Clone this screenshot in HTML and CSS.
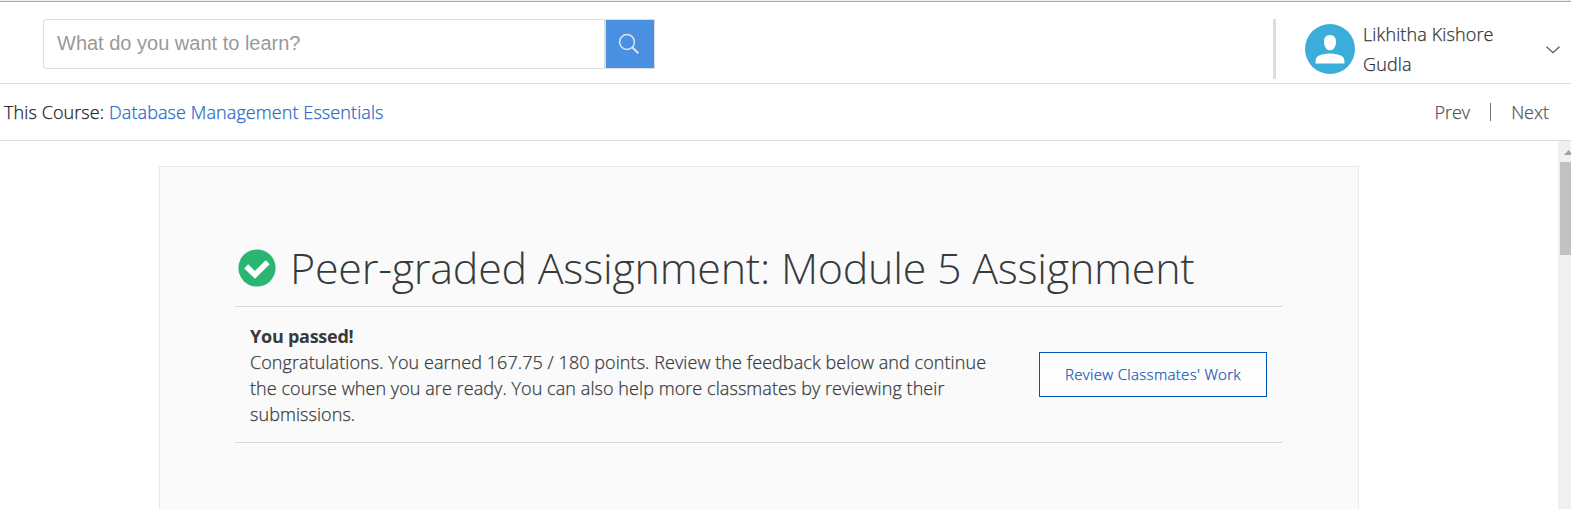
FILE: index.html
```html
<!DOCTYPE html>
<html lang="en">
<head>
<meta charset="utf-8">
<title>Peer-graded Assignment: Module 5 Assignment</title>
<link rel="stylesheet" href="styles.css">
</head>
<body>
<div class="top-rule"></div>
<header class="header">
  <form class="search">
    <input class="search-input" type="text" placeholder="What do you want to learn?">
    <button class="search-button" type="button" aria-label="Search">
      <svg width="22" height="22" viewBox="0 0 22 22" fill="none" stroke="#dde5ee" stroke-width="1.5"><circle cx="9" cy="9" r="7.4"/><path d="M14.3 14.3L20.3 20.3" stroke-width="2"/></svg>
    </button>
  </form>
  <div class="account">
    <svg class="avatar" width="50" height="50" viewBox="0 0 50 50"><circle cx="25" cy="25" r="25" fill="#3badda"/><path d="M25 11c4.200 0 6.200 3 6 7.200-.2 4.600-2.600 8.100-6 8.100s-5.800-3.500-6-8.100C18.800 14 20.800 11 25 11zM10.500 39.500c0-3.500.3-6.300 2.600-7.400C16 30.600 20.500 29.600 25 29.600s9 1 11.900 2.500c2.300 1.100 2.600 3.900 2.600 7.400z" fill="#fff"/></svg>
    <div class="name">Likhitha Kishore<br>Gudla</div>
    <svg class="chevron" width="14" height="8" viewBox="0 0 14 8" fill="none" stroke="#555" stroke-width="1.2"><path d="M.5.700L7 6.800L13.500.700"/></svg>
  </div>
</header>
<nav class="course-bar">
  <div class="course">This Course: <a class="course-link">Database Management Essentials</a></div>
  <div class="pager"><a class="prev">Prev</a><span class="separator"></span><a class="next">Next</a></div>
</nav>
<div class="content">
  <main class="card">
    <div class="title-row">
      <svg class="check" width="38" height="38" viewBox="0 0 38 38"><circle cx="19" cy="19" r="18.600" fill="#2ab573"/><path d="M8.200 17.400L17 25.800L29.700 13.300" fill="none" stroke="#fff" stroke-width="5.600"/></svg>
      <h1 class="title">Peer-graded Assignment: Module 5 Assignment</h1>
    </div>
    <section class="status">
      <div class="message"><strong class="passed">You passed!</strong>
        <p class="body">Congratulations. You earned 167.75 / 180 points. Review the feedback below and continue<br>the course when you are ready. You can also help more classmates by reviewing their<br>submissions.</p>
      </div>
      <button class="review" type="button">Review Classmates' Work</button>
    </section>
  </main>
  <div class="scrollbar">
    <svg class="scroll-up" width="7" height="5" viewBox="0 0 7 5"><path d="M0 5L4.500 0L9 5z" fill="#a3a3a3"/></svg>
    <div class="thumb"></div>
  </div>
</div>
</body>
</html>
```

FILE: styles.css
```css
* { box-sizing: border-box; }
body {
  margin: 0;
  height: 509px;
  overflow: hidden;
  display: flex;
  flex-direction: column;
  background: #fff;
  color: #373a3c;
  font-family: "Open Sans", sans-serif;
  font-size: 18px;
  font-weight: 300;
}
.name, .course, .pager, .body, .review { -webkit-text-stroke: .25px currentColor; }
.top-rule {
  height: 2px;
  flex: none;
  border-top: 1px dotted #e0e0e0;
  border-bottom: 1px solid #a9a9a9;
}
.header {
  height: 82px;
  flex: none;
  display: flex;
  justify-content: space-between;
  padding: 17px 0 0 43px;
  border-bottom: 1px solid #ddd;
}
.search { display: flex; width: 612px; height: 50px; margin: 0; }
.search-input {
  width: 562px;
  padding: 0 13px 1px;
  border: 1px solid #ddd;
  border-radius: 3px 0 0 3px;
  outline: none;
  font: 20px "Liberation Sans", Arial, sans-serif;
}
.search-input::placeholder { color: #999; opacity: 1; }
.search-button {
  width: 50px;
  padding: 0 2px 0 0;
  display: flex;
  align-items: center;
  justify-content: center;
  border: 1px solid #ddd;
  background: #4a90e2;
}
.account {
  display: flex;
  width: 298px;
  height: 60px;
  padding-left: 29px;
  border-left: 3px solid #ddd;
}
.avatar { margin-top: 5px; flex: none; }
.name { margin-left: 8px; width: 183px; line-height: 30px; color: #333; letter-spacing: .13px; }
.chevron { margin-top: 27px; }
.course-bar {
  height: 57px;
  flex: none;
  display: flex;
  align-items: center;
  justify-content: space-between;
  padding: 0 22px 0 4px;
  border-bottom: 1px solid #ddd;
}
.course { color: #222; white-space: nowrap; letter-spacing: .09px; }
.course-link { color: #2a68c8; }
.pager { display: flex; align-items: center; color: #555; }
.separator { width: 1px; height: 18px; margin: 0 20px; background: #777; }
.content { display: flex; flex: 1; min-height: 0; }
.card {
  width: 1200px;
  margin: 25px auto 0 159px;
  padding: 72px 76px 0 75px;
  border: 1px solid #eaeaea;
  border-bottom: 0;
  background: #fafafa;
}
.title-row {
  display: flex;
  height: 68px;
  padding-left: 2.5px;
  border-bottom: 1px solid #d8d8d8;
}
.check { margin-top: 10px; flex: none; }
.title {
  margin: 0 0 0 14.5px;
  font-size: 43px;
  letter-spacing: -.25px;
  line-height: 57px;
  font-weight: 300;
  white-space: nowrap;
}
.status {
  display: flex;
  justify-content: space-between;
  align-items: center;
  height: 136px;
  padding: 0 15px;
  border-bottom: 1px solid #d8d8d8;
}
.message { line-height: 26px; white-space: nowrap; }
.passed { display: block; font-weight: 700; letter-spacing: -.25px; }
.body { margin: 0; letter-spacing: .07px; }
.review {
  width: 228px;
  height: 45px;
  padding: 0 0 2px;
  border: 1px solid #0056b3;
  background: #fdfdfd;
  color: #0f58b5;
  font: 300 15px "Open Sans", sans-serif;
  letter-spacing: .32px;
}
.scrollbar { width: 13px; padding: 9px 0 0 2px; background: #f0f0f0; }
.scroll-up { display: block; margin-left: 4px; }
.thumb { height: 93px; margin-top: 7px; background: #c1c1c1; }
```
